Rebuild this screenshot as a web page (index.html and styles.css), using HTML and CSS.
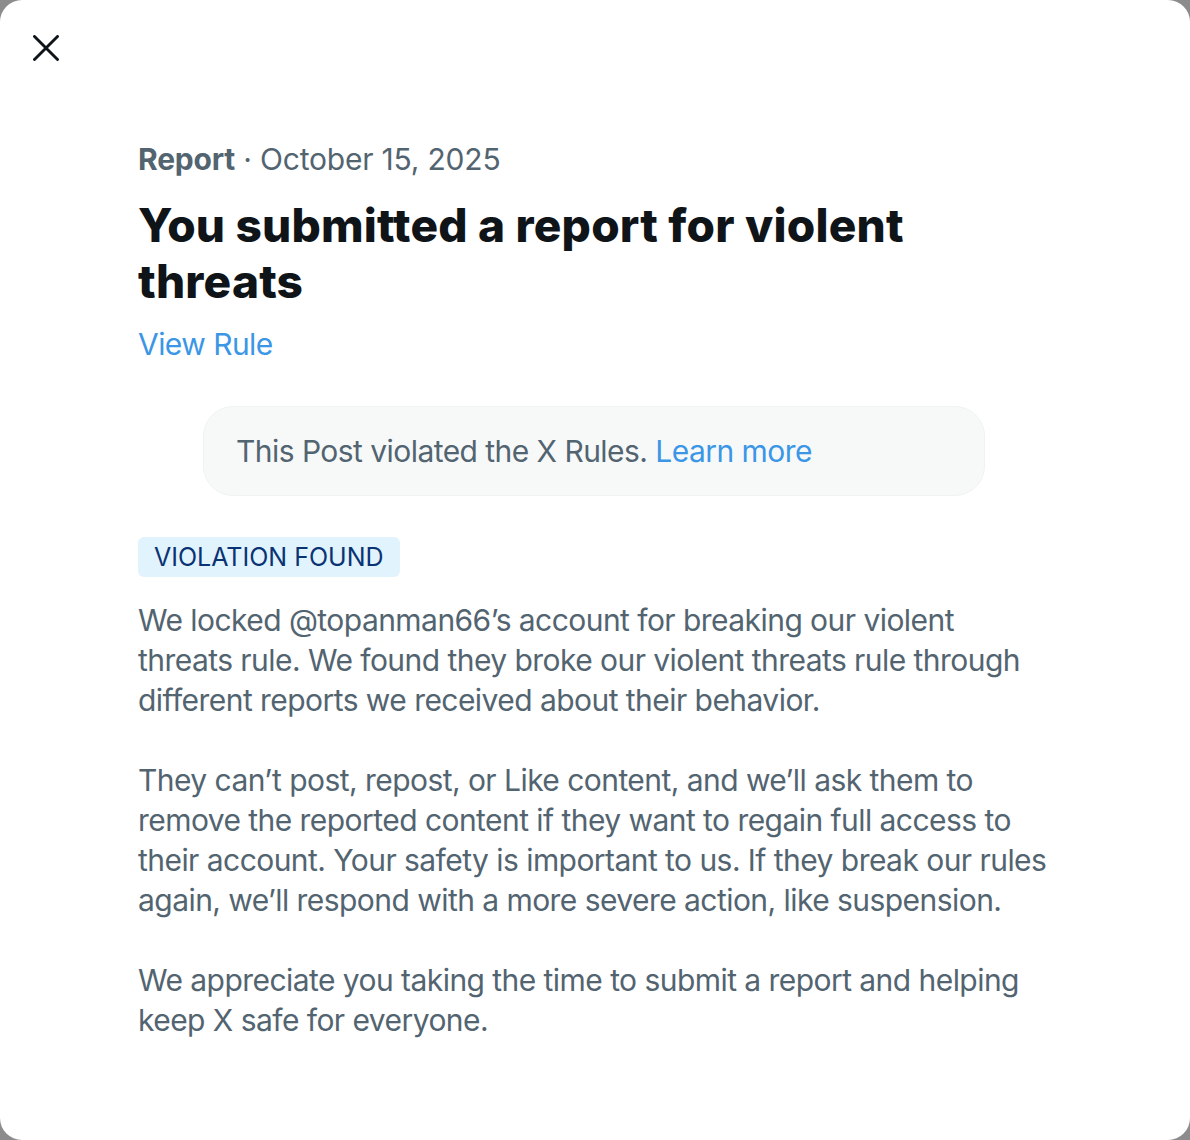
FILE: index.html
```html
<!DOCTYPE html>
<html lang="en">
<head>
<meta charset="utf-8">
<title>Report</title>
<link rel="stylesheet" href="styles.css">
</head>
<body>
<div class="modal">
  <div class="topbar">
    <button class="close" aria-label="Close">
      <svg viewBox="0 0 26 26" width="26" height="26"><path d="M1.5 1.5 L24.5 24.5 M24.5 1.5 L1.5 24.5" stroke="#0f1419" stroke-width="2.9" stroke-linecap="round" fill="none"/></svg>
    </button>
  </div>
  <main class="content">
    <div class="meta"><span class="meta-strong">Report</span> · October 15, 2025</div>
    <h1 class="title">You submitted a report for violent threats</h1>
    <a class="link rule-link" href="#">View Rule</a>
    <div class="notice">This Post violated the X Rules. <a class="link" href="#">Learn more</a></div>
    <div class="badge">VIOLATION FOUND</div>
    <p class="para">We locked @topanman66’s account for breaking our violent threats rule. We found they broke our violent threats rule through different reports we received about their behavior.</p>
    <p class="para">They can’t post, repost, or Like content, and we’ll ask them to remove the reported content if they want to regain full access to their account. Your safety is important to us. If they break our rules again, we’ll respond with a more severe action, like suspension.</p>
    <p class="para">We appreciate you taking the time to submit a report and helping keep X safe for everyone.</p>
  </main>
</div>
</body>
</html>
```

FILE: styles.css
```css
html, body {
  margin: 0;
  padding: 0;
  height: 100%;
}
body {
  background: #8c8c8c;
  font-family: Inter, "Noto Sans", "Liberation Sans", sans-serif;
  color: #536471;
}
.modal {
  background: #ffffff;
  height: 1140px;
  border-radius: 22px;
  box-sizing: border-box;
  overflow: hidden;
}
.topbar {
  height: 96px;
  padding: 0 0 0 33px;
  display: flex;
  align-items: center;
}
.close {
  border: 0;
  background: none;
  padding: 0;
  width: 26px;
  height: 26px;
  display: flex;
  cursor: pointer;
}
.content {
  width: 914px;
  margin: 0 0 0 138px;
  padding-top: 43px;
}
.meta {
  font-size: 30px;
  line-height: 40px;
  color: #536471;
  letter-spacing: -0.2px;
}
.meta-strong {
  font-weight: 700;
}
.title {
  margin: 18px 0 0 0;
  font-size: 46px;
  line-height: 56px;
  font-weight: 800;
  color: #0f1419;
  letter-spacing: 0.2px;
  max-width: 800px;
}
.link {
  color: #3b96e6;
  text-decoration: none;
}
.rule-link {
  display: block;
  margin-top: 15px;
  font-size: 30px;
  line-height: 40px;
  letter-spacing: -0.55px;
}
.notice {
  width: 782px;
  box-sizing: border-box;
  margin: 42px 0 0 65px;
  height: 90px;
  display: flex;
  align-items: center;
  padding: 0 32px;
  background: #f7f9f9;
  border: 1px solid #eff3f4;
  border-radius: 30px;
  font-size: 30px;
  letter-spacing: -0.55px;
  white-space: pre;
}
.badge {
  display: inline-block;
  margin-top: 41px;
  padding: 0 16px;
  height: 40px;
  line-height: 40px;
  background: #e1f3fd;
  color: #0a3374;
  font-size: 25px;
  border-radius: 6px;
}
.para {
  margin: 23px 0 40px 0;
  font-size: 30px;
  line-height: 40px;
  letter-spacing: -0.55px;
}
.para + .para {
  margin-top: 0;
}
```
